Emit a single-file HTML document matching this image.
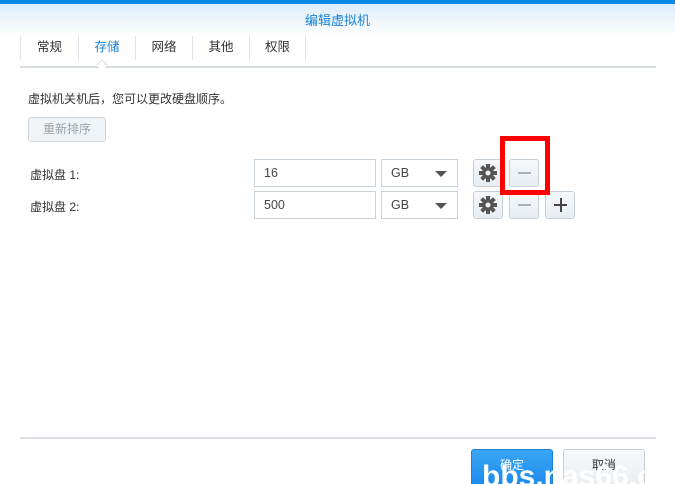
<!DOCTYPE html>
<html><head><meta charset="utf-8"><style>
*{box-sizing:border-box;margin:0;padding:0}
html,body{width:675px;height:484px;overflow:hidden}
body{position:relative;background:#fff;font-family:"Liberation Sans","Noto Sans CJK SC",sans-serif;font-size:12px;color:#333}
.a{position:absolute}
.top{left:0;top:0;width:675px;height:4px;background:#0a8ae6}
.hdr{left:0;top:4px;width:675px;height:32px;background:linear-gradient(#dcedfb,#fff)}
.title{left:0;top:10px;width:675px;text-align:center;color:#1a82d8;font-size:13px}
.tab{top:36px;height:24px;width:44px;border-left:1px solid #dde3ea;text-align:center;line-height:22px;font-size:12.5px;color:#333}
.inp{height:28px;border:1px solid #c9d2db;background:#fff;padding-left:9px;line-height:26px;font-size:12.5px;color:#444}
.btn{width:30px;height:28px;border:1px solid #c6cfd8;border-radius:3px;background:linear-gradient(#f7f9fb,#e8edf2)}
</style></head><body>
<div class="a top"></div><div class="a hdr"></div>
<div class="a title">编辑虚拟机</div>
<div class="a tab" style="left:20px;width:58px">常规</div>
<div class="a tab" style="left:78px;width:57px;color:#1a82d8">存储</div>
<div class="a tab" style="left:135px;width:57px">网络</div>
<div class="a tab" style="left:192px;width:57px">其他</div>
<div class="a tab" style="left:249px;width:57px;border-right:1px solid #dde3ea">权限</div>
<div class="a" style="left:20px;top:66px;width:636px;height:2px;background:#d8dde3"></div>
<div class="a" style="left:98px;top:61px;width:8px;height:8px;background:#fff;border-left:1px solid #d8dde3;border-top:1px solid #d8dde3;transform:rotate(45deg)"></div>
<div class="a" style="left:28px;top:90px">虚拟机关机后，您可以更改硬盘顺序。</div>
<div class="a" style="left:28px;top:117px;width:78px;height:25px;border:1px solid #cfd6dd;border-radius:3px;background:#f1f4f7;color:#9aa3ab;text-align:center;line-height:23px">重新排序</div>
<div class="a" style="left:30px;top:166px">虚拟盘 1:</div>
<div class="a" style="left:30px;top:198px">虚拟盘 2:</div>
<div class="a inp" style="left:254px;top:159px;width:122px">16</div>
<div class="a inp" style="left:254px;top:191px;width:122px">500</div>
<div class="a inp" style="left:381px;top:159px;width:77px">GB<span style="position:absolute;right:10px;top:11px;border:6px solid transparent;border-top:6px solid #555;border-bottom:0"></span></div>
<div class="a inp" style="left:381px;top:191px;width:77px">GB<span style="position:absolute;right:10px;top:11px;border:6px solid transparent;border-top:6px solid #555;border-bottom:0"></span></div>
<div class="a btn" style="left:473px;top:159px"><svg width="28" height="26" viewBox="0 0 28 26"><g transform="translate(14,13)" fill="#555"><circle r="6"/><g id="t"><rect x="-2" y="-9" width="4" height="18"/><rect x="-9" y="-2" width="18" height="4"/></g><use href="#t" transform="rotate(45)"/></g><circle cx="14" cy="13" r="2.5" fill="#eef1f4"/></svg></div>
<div class="a btn" style="left:473px;top:191px"><svg width="28" height="26" viewBox="0 0 28 26"><g transform="translate(14,13)" fill="#555"><circle r="6"/><g id="t2"><rect x="-2" y="-9" width="4" height="18"/><rect x="-9" y="-2" width="18" height="4"/></g><use href="#t2" transform="rotate(45)"/></g><circle cx="14" cy="13" r="2.5" fill="#eef1f4"/></svg></div>
<div class="a btn" style="left:509px;top:159px"><div class="a" style="left:8px;top:12px;width:13px;height:2px;background:#a8b0b8"></div></div>
<div class="a btn" style="left:509px;top:191px"><div class="a" style="left:8px;top:12px;width:13px;height:2px;background:#a8b0b8"></div></div>
<div class="a btn" style="left:545px;top:191px"><div class="a" style="left:8px;top:12px;width:13px;height:2px;background:#444"></div><div class="a" style="left:13.5px;top:6px;width:2px;height:14px;background:#444"></div></div>
<div class="a" style="left:500px;top:136px;width:50px;height:59px;border:5px solid #f00"></div>
<div class="a" style="left:20px;top:437px;width:636px;height:2px;background:#dcdfe3"></div>
<div class="a" style="left:471px;top:449px;width:82px;height:40px;border:1px solid #1d7fd6;border-radius:3px;background:linear-gradient(#3aa6f5,#1a88ec);color:#fff;text-align:center;line-height:30px">确定</div>
<div class="a" style="left:563px;top:449px;width:82px;height:40px;border:1px solid #c6cfd8;border-radius:3px;background:linear-gradient(#f7f9fb,#e8edf2);text-align:center;line-height:30px">取消</div>
<div class="a" style="left:0;top:0;width:675px;height:484px;overflow:hidden"><div class="a" style="left:482px;top:460px;font:bold 30px 'Liberation Sans',sans-serif;color:#fff;white-space:nowrap">bbs.nas66.com</div></div>
</body></html>
